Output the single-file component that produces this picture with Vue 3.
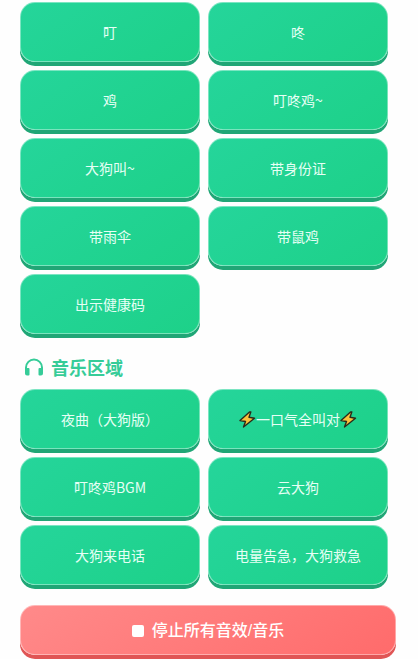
<template>
  <main class="board">
    <div class="grid">
      <button
        v-for="name in sounds"
        :key="name"
        type="button"
        class="btn"
        @click="play(name)"
      >
        {{ name }}
      </button>
    </div>

    <h2 class="title">
      <svg class="headphones" viewBox="0 0 20 18" aria-hidden="true">
        <path
          d="M2 13V9.5a8 8 0 0 1 16 0V13"
          fill="none"
          stroke="currentColor"
          stroke-width="2"
        />
        <path
          d="M1 10h3.5a1 1 0 0 1 1 1v5.500a1 1 0 0 1-1 1H3a2 2 0 0 1-2-2zM19 10h-3.500a1 1 0 0 0-1 1v5.500a1 1 0 0 0 1 1H17a2 2 0 0 0 2-2z"
          fill="currentColor"
        />
      </svg>
      <span>音乐区域</span>
    </h2>

    <div class="grid">
      <button
        v-for="song in songs"
        :key="song.name"
        type="button"
        class="btn"
        @click="play(song.name)"
      >
        <svg v-if="song.bolt" class="bolt" viewBox="0 0 17 17" aria-hidden="true">
          <path d="M10.500 1 1 9.500 6.500 10.500 4.500 16 15.500 7.300 10 6.300 11.800 1z" />
        </svg>
        <span>{{ song.name }}</span>
        <svg v-if="song.bolt" class="bolt" viewBox="0 0 17 17" aria-hidden="true">
          <path d="M10.500 1 1 9.500 6.500 10.500 4.500 16 15.500 7.300 10 6.300 11.800 1z" />
        </svg>
      </button>
    </div>

    <button type="button" class="btn stop" @click="playing = []">
      <span class="square"></span>
      <span>停止所有音效/音乐</span>
    </button>
  </main>
</template>

<script setup>
import { ref } from "vue";

const sounds = [
  "叮",
  "咚",
  "鸡",
  "叮咚鸡~",
  "大狗叫~",
  "带身份证",
  "带雨伞",
  "带鼠鸡",
  "出示健康码",
];

const songs = [
  { name: "夜曲（大狗版）" },
  { name: "一口气全叫对", bolt: true },
  { name: "叮咚鸡BGM" },
  { name: "云大狗" },
  { name: "大狗来电话" },
  { name: "电量告急，大狗救急" },
];

const playing = ref([]);
const play = (name) => {
  playing.value.push(name);
};
</script>

<style>
body {
  margin: 0;
  background: #fefefe;
}
</style>

<style scoped>
.board {
  padding: 2px 22px 4px 20px;
  font-family: "Kaiti SC", KaiTi, STKaiti, "Noto Sans CJK SC", sans-serif;
}

.grid {
  display: grid;
  grid-template-columns: 1fr 1fr;
  gap: 8px;
  padding-right: 8px;
}

.btn {
  display: flex;
  align-items: center;
  justify-content: center;
  height: 60px;
  padding: 0 8px;
  border: 1px solid rgba(255, 255, 255, 0.4);
  border-radius: 15px;
  background: linear-gradient(145deg, #25d59b, #1dd188) border-box;
  box-shadow: 0 4px 0 #20a676;
  color: #e6fff5;
  font-family: inherit;
  font-size: 14px;
  line-height: 20px;
  white-space: nowrap;
  cursor: pointer;
}

.btn:active {
  box-shadow: 0 2px 0 #20a676;
}

.bolt {
  width: 17px;
  height: 17px;
  fill: #fbc13a;
  stroke: #2b2b1b;
  stroke-width: 1.4;
  stroke-linejoin: round;
}

.title {
  display: flex;
  align-items: center;
  gap: 7px;
  margin: 19px 0 8px;
  padding-left: 4px;
  color: #36cc98;
  font-size: 18px;
  font-weight: 700;
  line-height: 28px;
}

.headphones {
  width: 20px;
  height: 18px;
}

.stop {
  gap: 8px;
  width: 100%;
  height: 50px;
  margin-top: 20px;
  padding-top: 2px;
  background: linear-gradient(145deg, #ff8a8a, #ff6b6b) border-box;
  box-shadow: 0 4px 0 #e05555;
  color: #fff;
  font-family: "Liberation Sans", "Noto Sans CJK SC", sans-serif;
  font-size: 16px;
  font-weight: 500;
  line-height: 24px;
}

.stop:active {
  box-shadow: 0 2px 0 #e05555;
}

.square {
  width: 12px;
  height: 12px;
  border-radius: 2px;
  background: #fff;
}
</style>
